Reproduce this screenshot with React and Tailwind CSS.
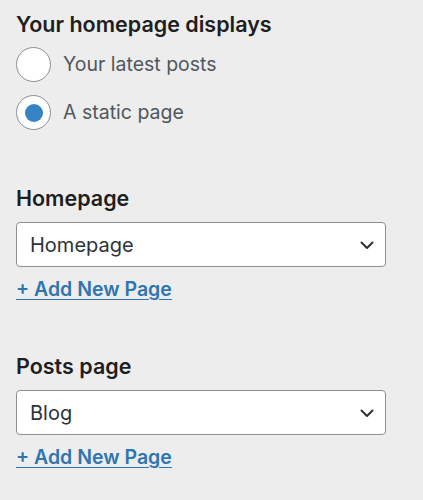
import React from "react";

const Chevron = () => (
  <svg width="16" height="16" viewBox="0 0 16 16" fill="none" className="shrink-0">
    <path d="M2.5 5.5l5.5 5.5 5.5-5.5" stroke="#2c3338" strokeWidth="2" strokeLinecap="round" strokeLinejoin="round" />
  </svg>
);

const Radio = ({ checked, label }) => (
  <label className="flex items-center gap-[12px] h-[35px]">
    <span className="w-[35px] h-[35px] rounded-full border border-[#8c8f94] bg-white flex items-center justify-center shrink-0">
      {checked && <span className="w-[18px] h-[18px] rounded-full bg-[#3582c4]"></span>}
    </span>
    <span className="text-[19.5px] text-[#50575e]">{label}</span>
  </label>
);

const PageSelect = ({ title, value, top }) => (
  <div className={top}>
    <h3 className="text-[21.5px] font-semibold text-[#1e1e1e] leading-[24px]">{title}</h3>
    <div className="mt-[12px] w-[370px] h-[45px] rounded-[4px] border border-[#8c8f94] bg-white flex items-center justify-between pl-[13px] pr-[10px]">
      <span className="text-[20px] text-[#2c3338]">{value}</span>
      <Chevron />
    </div>
    <a href="#" className="block mt-[11px] text-[19.5px] font-semibold text-[#2f75ae] underline underline-offset-[3px] leading-[23px]">
      + Add New Page
    </a>
  </div>
);

export default function App() {
  return (
    <div className="w-[423px] h-[500px] bg-[#ededed] px-[16px] pt-[10px]" style={{ fontFamily: "Inter, 'Noto Sans', sans-serif" }}>
      <h2 className="text-[21.5px] font-semibold text-[#1e1e1e] leading-[28px]">Your homepage displays</h2>
      <div className="mt-[9px] flex flex-col gap-[13px]">
        <Radio label="Your latest posts" />
        <Radio checked label="A static page" />
      </div>
      <PageSelect title="Homepage" value="Homepage" top="mt-[56px]" />
      <PageSelect title="Posts page" value="Blog" top="mt-[53px]" />
    </div>
  );
}
